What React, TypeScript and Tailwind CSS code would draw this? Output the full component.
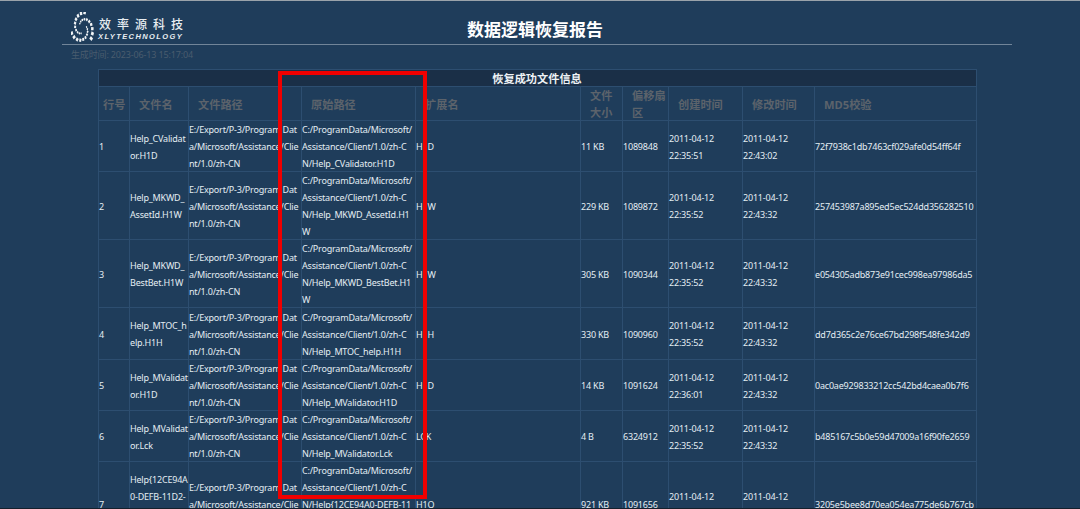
const FONT = '"Noto Sans", "Noto Sans CJK SC", sans-serif';

const P3 = ['E:/Export/P-3/Program Dat', 'a/Microsoft/Assistance/Clie', 'nt/1.0/zh-CN'];
const O = 'C:/ProgramData/Microsoft/';
const A = 'Assistance/Client/1.0/zh-C';
const rows = [
  { n: '1', name: ['Help_CValidat', 'or.H1D'], orig: [O, A, 'N/Help_CValidator.H1D'], ext: 'H1D', size: '11 KB', off: '1089848', c: '22:35:51', m: '22:43:02', md5: '72f7938c1db7463cf029afe0d54ff64f', h: 'h-[51px]' },
  { n: '2', name: ['Help_MKWD_', 'AssetId.H1W'], orig: [O, A, 'N/Help_MKWD_AssetId.H1', 'W'], ext: 'H1W', size: '229 KB', off: '1089872', c: '22:35:52', m: '22:43:32', md5: '257453987a895ed5ec524dd356282510', h: 'h-[68px]' },
  { n: '3', name: ['Help_MKWD_', 'BestBet.H1W'], orig: [O, A, 'N/Help_MKWD_BestBet.H1', 'W'], ext: 'H1W', size: '305 KB', off: '1090344', c: '22:35:52', m: '22:43:32', md5: 'e054305adb873e91cec998ea97986da5', h: 'h-[68px]' },
  { n: '4', name: ['Help_MTOC_h', 'elp.H1H'], orig: [O, A, 'N/Help_MTOC_help.H1H'], ext: 'H1H', size: '330 KB', off: '1090960', c: '22:35:52', m: '22:43:32', md5: 'dd7d365c2e76ce67bd298f548fe342d9', h: 'h-[52px]' },
  { n: '5', name: ['Help_MValidat', 'or.H1D'], orig: [O, A, 'N/Help_MValidator.H1D'], ext: 'H1D', size: '14 KB', off: '1091624', c: '22:36:01', m: '22:43:32', md5: '0ac0ae929833212cc542bd4caea0b7f6', h: 'h-[51px]' },
  { n: '6', name: ['Help_MValidat', 'or.Lck'], orig: [O, A, 'N/Help_MValidator.Lck'], ext: 'LCK', size: '4 B', off: '6324912', c: '22:35:52', m: '22:43:32', md5: 'b485167c5b0e59d47009a16f90fe2659', h: 'h-[51px]' },
  { n: '7', name: ['Help{12CE94A', '0-DEFB-11D2-', 'A1C5-00C04F', '8E6A3C}.H1Q'], orig: [O, A, 'N/Help{12CE94A0-DEFB-11', 'D2-A1C5-00C04F8E6A3C}.', 'H1Q'], ext: 'H1Q', size: '921 KB', off: '1091656', c: '22:35:52', m: '22:43:32', md5: '3205e5bee8d70ea054ea775de6b767cb', h: 'h-[85px]' },
];

const widths = [31, 59, 113, 114, 165, 42, 46, 74, 72, 162];
const heads = [
  { t: ['行号'], cls: 'pl-[4px]' },
  { t: ['文件名'] }, { t: ['文件路径'] }, { t: ['原始路径'] }, { t: ['扩展名'] },
  { t: ['文件', '大小'] }, { t: ['偏移扇', '区'] }, { t: ['创建时间'] }, { t: ['修改时间'] }, { t: ['MD5校验'] },
];

const cell = 'p-0 align-middle whitespace-nowrap shadow-[inset_-1px_-1px_0_#2d4e70]';

function Lines({ l }: { l: string[] }) {
  return <>{l.map((s, i) => <div key={i}>{s}</div>)}</>;
}

function Logo() {
  const dots: { x: number; y: number; r: number; w: number; h: number }[] = [];
  for (let a = 0; a < 3; a++) {
    for (let i = 0; i < 10; i++) {
      const deg = a * 120 + i * 19 - 10;
      const ang = (deg * Math.PI) / 180;
      const rad = 5 + i * 1;
      dots.push({ x: 14 + Math.cos(ang) * rad, y: 14 + Math.sin(ang) * rad, r: deg + 90, w: 1.5 + i * 0.17, h: 1.5 + i * 0.22 });
    }
  }
  return (
    <div className="flex items-start gap-[4px] mt-[11px]">
      <svg width="23" height="32" viewBox="0 0 28 28" preserveAspectRatio="none">
        {dots.map((d, i) => (
          <rect key={i} x={d.x - d.w / 2} y={d.y - d.h / 2} width={d.w} height={d.h} fill="#f1f4f6" transform={`rotate(${d.r} ${d.x} ${d.y})`} />
        ))}
      </svg>
      <div className="flex flex-col mt-[5px]">
        <div className="ml-[1px] text-[12px] leading-[15px] tracking-[6px] text-[#e8edf1] font-medium">效率源科技</div>
        <div className="mt-[-0.5px] text-[7.5px] leading-[9px] italic font-bold tracking-[1.4px] text-[#e8edf1]" style={{ fontFamily: '"Liberation Sans", sans-serif' }}>XLYTECHNOLOGY</div>
      </div>
    </div>
  );
}

export default function App() {
  return (
    <div className="relative h-[509px] w-[1080px] overflow-hidden bg-[#1f3d5b] border-t border-[#9aa3aa]" style={{ fontFamily: FONT }}>
      <div className="ml-[62px] w-[950px] h-[44px] border-b border-[#718599] flex items-start pl-[9px]">
        <Logo />
        <h1 className="ml-[278px] text-[17px] leading-[24px] mt-[17px] font-bold text-white">数据逻辑恢复报告</h1>
      </div>
      <div className="ml-[71px] mt-[3px] h-[14px] text-[9px] leading-[14px] tracking-[-0.15px] text-[#4a5c6e]">生成时间: 2023-06-13 15:17:04</div>
      <table className="ml-[98px] mt-[7px] w-[879px] table-fixed border-separate border-spacing-0 border-t border-l border-[#2d4e70] text-[9px] tracking-[-0.2px] leading-[17px] text-[#e4edf3]">
        <colgroup>
          {widths.map((w, i) => <col key={i} style={{ width: w }} />)}
        </colgroup>
        <thead>
          <tr className="h-[17px]">
            <th colSpan={10} className={`${cell} bg-[#1a2f47] pr-[2px] text-center text-[11.2px] tracking-normal font-bold text-[#eef2f5]`}>恢复成功文件信息</th>
          </tr>
          <tr className="h-[34px]">
            {heads.map((h, i) => (
              <th key={i} className={`${cell} text-left text-[11.2px] tracking-normal font-bold text-[#5c636b] ${h.cls ?? 'pl-[9px]'}`}>
                <Lines l={h.t} />
              </th>
            ))}
          </tr>
        </thead>
        <tbody>
          {rows.map((r) => (
            <tr key={r.n} className={r.h}>
              <td className={cell}>{r.n}</td>
              <td className={cell}><Lines l={r.name} /></td>
              <td className={cell}><Lines l={P3} /></td>
              <td className={cell}><Lines l={r.orig} /></td>
              <td className={cell}>{r.ext}</td>
              <td className={cell}>{r.size}</td>
              <td className={cell}>{r.off}</td>
              <td className={cell}><Lines l={['2011-04-12', r.c]} /></td>
              <td className={cell}><Lines l={['2011-04-12', r.m]} /></td>
              <td className={cell}>{r.md5}</td>
            </tr>
          ))}
        </tbody>
      </table>
      <div className="absolute left-[278px] top-[70px] w-[149px] h-[428px] border-[4px] border-[#f00000]" />
      <div className="absolute left-0 right-0 bottom-0 h-px bg-[#14202c]" />
    </div>
  );
}
